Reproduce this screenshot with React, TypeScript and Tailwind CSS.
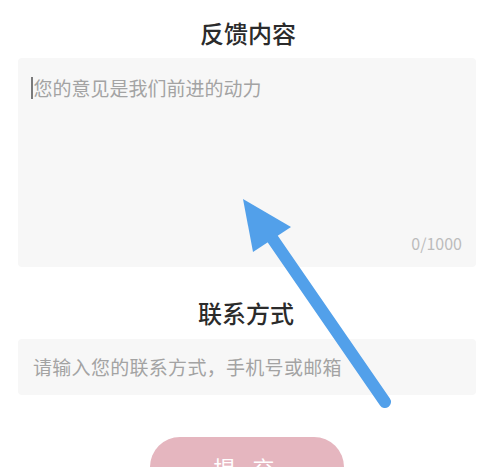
import React from "react";

export default function App() {
  return (
    <div
      className="relative w-[492px] h-[467px] overflow-hidden bg-white"
      style={{ fontFamily: '"Noto Sans CJK SC", "Noto Sans", sans-serif' }}
    >
      <div className="pt-[17px] flex flex-col items-center">
        <div className="text-[24px] leading-[32px] font-medium text-[#2b2b2b] ml-[4px]">反馈内容</div>
      </div>
      <div className="mt-[9px] ml-[18px] w-[458px] h-[209px] bg-[#f7f7f7] rounded-[4px] flex flex-col justify-between pt-[18px] pb-[14px] pl-[13px] pr-[14px]">
        <div className="flex items-center">
          <div className="w-[1.5px] h-[22px] bg-[#7a7a7a] mr-[1px]" />
          <span className="text-[19px] leading-[24px] text-[#a3a3a3]">您的意见是我们前进的动力</span>
        </div>
        <div className="self-end text-[16px] leading-[20px] text-[#bcbcbc]">0/1000</div>
      </div>
      <div className="mt-[30px] flex flex-col items-center">
        <div className="text-[24px] leading-[32px] font-medium text-[#2b2b2b]">联系方式</div>
      </div>
      <div className="mt-[10px] ml-[18px] w-[458px] h-[56px] bg-[#f7f7f7] rounded-[4px] flex items-center pl-[15px]">
        <span className="text-[19px] leading-[24px] tracking-[0.3px] text-[#a3a3a3]">请输入您的联系方式，手机号或邮箱</span>
      </div>
      <div className="mt-[42px] flex justify-center">
        <div className="ml-[2px] w-[194px] h-[60px] rounded-[30px] bg-[#e5b6bf] flex items-center justify-center">
          <span className="text-[22px] leading-[28px] text-white tracking-[6px]">提 交</span>
        </div>
      </div>
      <svg
        className="absolute left-0 top-0 pointer-events-none"
        width="492"
        height="467"
        viewBox="0 0 492 467"
      >
        <line x1="272" y1="238" x2="385" y2="402" stroke="#52a0ea" strokeWidth="12" strokeLinecap="round" />
        <polygon points="243,199 291,227 253,252" fill="#52a0ea" />
      </svg>
    </div>
  );
}
